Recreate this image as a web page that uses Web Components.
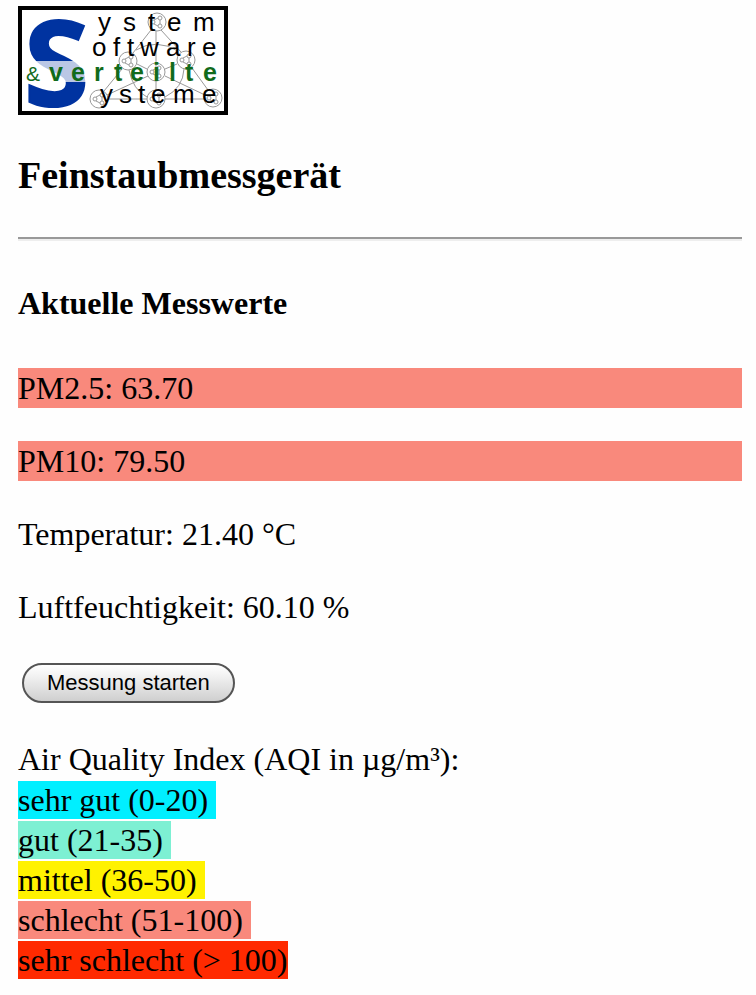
<!DOCTYPE html>
<html lang="de">
<head>
<meta charset="utf-8">
<meta name="viewport" content="width=device-width, initial-scale=1">
<title>Feinstaubmessgerät</title>
<style>
  body { margin: 0; background: #fefefe; color: #000; font: 32px/40px "Liberation Serif", "Times New Roman", serif; }
</style>
</head>
<body>
<monitor-page>
  <group-logo slot="logo"></group-logo>
  <span slot="title">Feinstaubmessgerät</span>
  <span slot="subtitle">Aktuelle Messwerte</span>
  <measured-value level="bad">PM2.5: 63.70</measured-value>
  <measured-value level="bad">PM10: 79.50</measured-value>
  <measured-value>Temperatur: 21.40 °C</measured-value>
  <measured-value>Luftfeuchtigkeit: 60.10 %</measured-value>
  <start-button slot="action">Messung starten</start-button>
  <quality-legend slot="legend">
    <span slot="heading">Air Quality Index (AQI in µg/m³):</span>
    <quality-level level="best">sehr gut (0-20)</quality-level>
    <quality-level level="good">gut (21-35)</quality-level>
    <quality-level level="medium">mittel (36-50)</quality-level>
    <quality-level level="bad">schlecht (51-100)</quality-level>
    <quality-level level="worst">sehr schlecht (&gt; 100)</quality-level>
  </quality-legend>
</monitor-page>
<script>
const define = (name, html) => {
  const template = document.createElement('template');
  template.innerHTML = html;
  customElements.define(name, class extends HTMLElement {
    constructor() {
      super();
      this.attachShadow({ mode: 'open' }).append(template.content.cloneNode(true));
    }
  });
};

define('monitor-page', `
  <style>
    :host { display: block; padding: 6px 14px 14px 18px; }
    h1, h2 { margin: 0; line-height: 40px; font-weight: bold; }
    h1 { font-size: 38px; margin-top: 40px; }
    h2 { font-size: 32px; }
    hr { margin: 42px 0; height: 0; border: 0; border-top: 2px solid #999; border-bottom: 2px solid #eee; }
    .values { display: flex; flex-direction: column; gap: 33px; margin-top: 45px; }
    .action { margin: 36px 0; padding-left: 4px; }
  </style>
  <main>
    <slot name="logo"></slot>
    <h1><slot name="title"></slot></h1>
    <hr>
    <h2><slot name="subtitle"></slot></h2>
    <div class="values"><slot></slot></div>
    <div class="action"><slot name="action"></slot></div>
    <slot name="legend"></slot>
  </main>`);

define('measured-value', `
  <style>
    :host { display: block; }
    :host([level="bad"]) { background: #f9897c; }
    p { margin: 0; }
  </style>
  <p><slot></slot></p>`);

define('start-button', `
  <style>
    :host { display: block; }
    button {
      display: block; height: 40px; padding: 0 23px; color: #000;
      font: 22px/36px "Liberation Sans", Arial, sans-serif;
      border: 2px solid #555; border-radius: 20px;
      background: linear-gradient(#fff, #f2f2f2 30%, #cfcfcf);
    }
  </style>
  <button type="button"><slot></slot></button>`);

define('quality-legend', `
  <style>
    :host { display: block; }
    .levels { display: flex; flex-direction: column; align-items: flex-start; gap: 2px; margin-top: 2px; }
  </style>
  <div><slot name="heading"></slot></div>
  <div class="levels"><slot></slot></div>`);

define('quality-level', `
  <style>
    :host { display: block; line-height: 38px; padding-right: 8px; }
    :host([level="best"]) { background: #00efff; }
    :host([level="good"]) { background: #7df0d3; }
    :host([level="medium"]) { background: #fff200; }
    :host([level="bad"]) { background: #f9897c; }
    :host([level="worst"]) { background: #ff2a00; padding-right: 0; }
  </style>
  <slot></slot>`);

define('group-logo', `
  <style>
    :host { display: block; }
    svg { display: block; width: 210px; height: 109px; background: #fff; }
    text { font-family: "Liberation Sans", Arial, sans-serif; font-size: 26px; }
    .big { font: 700 118px/1 "Liberation Sans Narrow", "Open Sans", sans-serif; fill: #0033a0; stroke: #0033a0; stroke-width: 2; }
    .green { font-size: 25px; font-weight: bold; fill: #116b1c; }
    .amp { font-size: 21px; fill: #116b1c; }
    .net { fill: none; stroke: #999; stroke-width: 1; }
  </style>
  <svg viewBox="18 6 210 109" role="img" aria-label="System Software &amp; verteilte Systeme">
    <defs>
      <g id="node">
        <circle r="9"/><circle cx="-4" cy="0" r="2"/><circle cx="3" cy="-4" r="2"/><circle cx="3" cy="4" r="2"/>
        <path d="M-3-2 1-4M-3 2 1 4M3-2V2"/>
      </g>
    </defs>
    <text class="big" x="24" y="106">S</text>
    <rect x="25" y="61" width="62" height="21" fill="#fff" opacity=".73"/>
    <g class="net">
      <path d="M151 30 133 53M161 30 181 52M156 31V90M122 69 104 91M192 68 208 90M108 99H147M165 99H204M137 64 147 69M177 64 165 69M148 76 107 95M165 76 205 95M129 70Q133 90 147 97M184 69Q183 88 165 97M136 50Q156 38 178 51"/>
      <use href="#node" x="157" y="22"/><use href="#node" x="128" y="61"/><use href="#node" x="186" y="60"/>
      <use href="#node" x="156" y="72"/><use href="#node" x="99" y="99"/><use href="#node" x="156" y="99"/><use href="#node" x="213" y="98"/>
    </g>
    <text x="98 123 148 167 193" y="31">ystem</text>
    <text x="92 113 127 140 166 187 202" y="56">oftware</text>
    <text class="amp" x="26" y="81">&amp;</text>
    <text class="green" x="49 71 94 114 130 153 169 185 203" y="81">verteilte</text>
    <text x="100 119 138 151 173 202" y="103">ysteme</text>
    <rect x="20" y="8" width="206" height="105" fill="none" stroke="#000" stroke-width="4"/>
  </svg>`);
</script>
</body>
</html>
